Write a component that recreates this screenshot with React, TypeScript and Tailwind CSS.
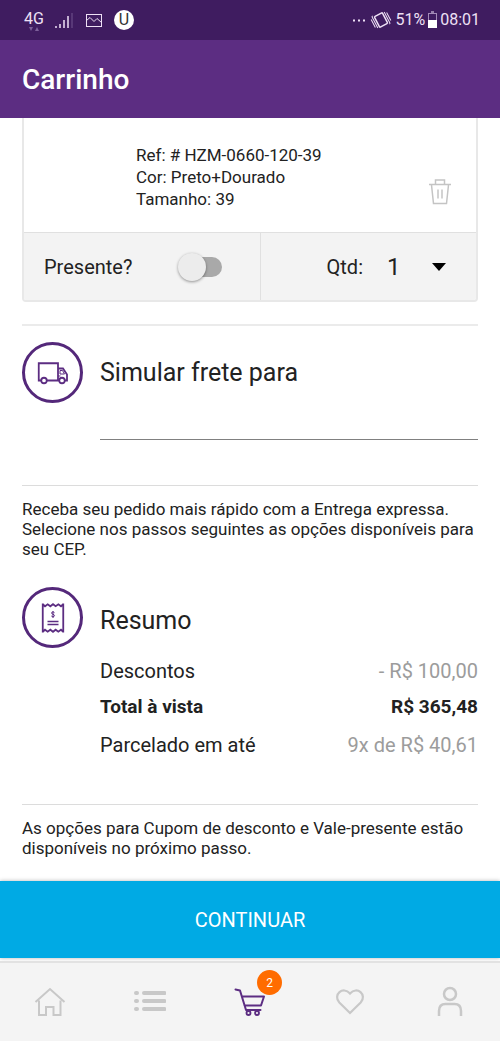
import { useState } from "react";

function StatusBar() {
  return (
    <div className="flex h-10 items-center justify-between bg-[#3f1c60] pl-6 pr-5 text-[#eee0f5]">
      <div className="flex items-center">
        <div className="flex flex-col items-center pt-0.5">
          <span className="text-base leading-4">4G</span>
          <svg width="12" height="5" viewBox="0 0 12 5" fill="#7d609a" aria-hidden="true">
            <path d="M1 0h4L3 4zM7 4h4L9 0z" />
          </svg>
        </div>
        <svg className="ml-2 h-5 w-6" viewBox="0 0 24 20" fill="none" stroke="currentColor" strokeWidth="1.5" aria-hidden="true">
          <path d="M4 18v-2M8 18v-4M12 18v-8M16 18V6" />
          <path d="M20 18V3" stroke="#73558f" strokeWidth="1" />
        </svg>
        <svg className="ml-2 h-5 w-5" viewBox="0 0 20 20" fill="none" stroke="currentColor" aria-hidden="true">
          <rect x="2.500" y="4.500" width="15" height="12" />
          <path d="M2.500 10.500 6 7.500l4 4 3-3 4.500 4" />
        </svg>
        <span className="ml-2.5 flex size-5 items-center justify-center rounded-full bg-white text-base leading-5 text-[#333]">U</span>
      </div>
      <div className="flex items-center">
        <svg width="12" height="3" viewBox="0 0 12 3" fill="currentColor" aria-hidden="true">
          <path d="M0 .5h2v2H0zM5 .5h2v2H5zM10 .5h2v2h-2z" />
        </svg>
        <svg className="ml-1 size-6" viewBox="0 0 24 24" fill="none" stroke="currentColor" aria-hidden="true">
          <g transform="rotate(-28 12 12)">
            <rect x="7.500" y="6" width="9" height="12" rx="1" strokeWidth="1.500" />
            <path d="M5.500 17.500v-12q0-1 1-1M3.500 16V7M18.500 6.500v12q0 1-1 1M20.500 8v9" strokeWidth="1" />
          </g>
        </svg>
        <span className="ml-0.5 text-base leading-5">51%</span>
        <svg className="ml-0.5" width="11" height="18" viewBox="0 0 11 18" fill="none" aria-hidden="true">
          <path d="M4 1h3" stroke="#eee0f5" />
          <rect x="1.500" y="2.500" width="8" height="14" stroke="#a48bb8" />
          <path d="M1 9h9v8H1z" fill="#fff" />
        </svg>
        <span className="ml-0.5 text-base leading-5">08:01</span>
      </div>
    </div>
  );
}

function TrashIcon() {
  return (
    <svg className="h-7 w-6" viewBox="0 0 24 28" fill="none" stroke="#c4c4c4" strokeWidth="1.500" aria-hidden="true">
      <path d="M1 6.500h22M3.500 7l2 18.500h13l2-18.500M7.500 6V2h9v4M10 11.500v9M14 11.500v9" />
    </svg>
  );
}

function TruckIcon() {
  return (
    <svg className="size-8" viewBox="0 0 32 32" fill="none" stroke="#5c2d82" strokeWidth="1.800" aria-hidden="true">
      <path d="M4 23.500H1.750V6.250H21v17.250H9.500M21 11.500h5l4 6v6h-2M21 23.500h1.500" />
      <circle cx="7" cy="23.500" r="2.750" />
      <circle cx="25" cy="23.500" r="2.750" />
      <path d="M23 13.500h2.500l2 3.500H23zM21 19h2.500" strokeWidth="1" />
    </svg>
  );
}

function ReceiptIcon() {
  return (
    <svg className="size-8" viewBox="0 0 32 32" fill="none" stroke="#5c2d82" strokeWidth="1.800" aria-hidden="true">
      <path d="M5.750 1.500v29M26.250 1.500v29M5.500 2l2.500 2.250 2.700-2 2.650 2 2.650-2 2.650 2 2.700-2L24 4.250 26.500 2M5.500 30 8 27.750l2.700 2 2.650-2 2.650 2 2.650-2 2.650 2 2.700-2L26.500 30" />
      <path d="M10.500 19.500h11M10.500 22.500h11" strokeWidth="1.500" />
      <path d="M17.500 10.700c-.5-1-3-1-3 .3 0 1.500 3 1 3 2.700 0 1.300-2.700 1.400-3.200.2M16 9v7" strokeWidth="1" />
    </svg>
  );
}

function SectionBadge({ children }: { children: React.ReactNode }) {
  return (
    <div className="flex size-[61px] shrink-0 items-center justify-center rounded-full border-[3px] border-[#54287a]">
      {children}
    </div>
  );
}

function ProductCard() {
  const [gift, setGift] = useState(false);
  return (
    <section className="overflow-hidden rounded-b border-x-2 border-b-2 border-[#e8e8e8]">
      <div className="flex items-end justify-between pb-[22px] pl-28 pr-6 pt-[26px]">
        <div className="text-[17px] leading-[22px]">
          <p>Ref: # HZM-0660-120-39</p>
          <p>Cor: Preto+Dourado</p>
          <p>Tamanho: 39</p>
        </div>
        <button type="button" aria-label="Remover produto" className="mb-1">
          <TrashIcon />
        </button>
      </div>
      <div className="grid h-[68px] grid-cols-[237fr_215fr] border-t border-[#e0e0e0] bg-[#f3f3f3] text-xl">
        <label className="flex items-center justify-between border-r border-[#e0e0e0] pl-5 pr-9">
          <span>Presente?</span>
          <span className="relative flex h-8 w-12 items-center">
            <input
              type="checkbox"
              role="switch"
              checked={gift}
              onChange={(e) => setGift(e.target.checked)}
              className="peer ml-3 h-5 w-[34px] appearance-none rounded-full bg-[#a9a9a9] checked:bg-[#9a74bb]"
            />
            <span className="pointer-events-none absolute left-0.5 size-7 rounded-full bg-[#ececec] shadow-[0_1px_3px_rgba(0,0,0,0.4)] peer-checked:left-5" />
          </span>
        </label>
        <label className="flex items-center justify-end pr-[30px]">
          <span>Qtd:</span>
          <span className="relative ml-6 flex items-center">
            <select className="w-[59px] appearance-none bg-transparent text-2xl text-[#222]" defaultValue="1">
              <option>1</option>
              <option>2</option>
              <option>3</option>
            </select>
            <svg className="pointer-events-none absolute right-0 h-2 w-[14px]" viewBox="0 0 14 8" aria-hidden="true">
              <path d="M0 0h14L7 8z" fill="#000" />
            </svg>
          </span>
        </label>
      </div>
    </section>
  );
}

const summary = [
  { label: "Descontos", value: "- R$ 100,00", total: false },
  { label: "Total à vista", value: "R$ 365,48", total: true },
  { label: "Parcelado em até", value: "9x de R$ 40,61", total: false },
];

function BottomNav() {
  const item = "flex h-full items-center justify-center";
  return (
    <nav className="grid h-20 grid-cols-5 border-t-2 border-[#e2e2e2] bg-[#f4f4f4] text-[#c8c8c8]">
      <a href="#inicio" aria-label="Início" className={item}>
        <svg className="size-8" viewBox="0 0 32 32" fill="none" stroke="currentColor" strokeWidth="2" aria-hidden="true">
          <path d="M1.500 16 16 3l14.500 13M5 14.500V29h7v-8h7.500v8h7V14.500" />
        </svg>
      </a>
      <a href="#categorias" aria-label="Categorias" className={item}>
        <svg className="size-8" viewBox="0 0 32 32" stroke="currentColor" strokeWidth="4" strokeLinecap="round" aria-hidden="true">
          <path d="M2 7h1M2 15h1M2 23h1M10 7h20.500M10 15h20.500M10 23h20.500" />
        </svg>
      </a>
      <a href="#carrinho" aria-label="Carrinho" aria-current="page" className={item}>
        <span className="relative">
          <svg className="size-8" viewBox="0 0 32 32" fill="none" stroke="#5c2d82" strokeWidth="2" strokeLinecap="round" strokeLinejoin="round" aria-hidden="true">
            <path d="M1.500 3.500 6 4.500l6 19.500h14.500M8 10.500h22l-3 9H10.500" />
            <circle cx="14.500" cy="27" r="2" strokeWidth="1.800" />
            <circle cx="23" cy="27" r="2" strokeWidth="1.800" />
          </svg>
          <span className="absolute -right-4 -top-4 flex size-[25px] items-center justify-center rounded-full bg-[#ff6c00] text-xs text-white">2</span>
        </span>
      </a>
      <a href="#favoritos" aria-label="Favoritos" className={item}>
        <svg className="size-8" viewBox="0 0 32 32" fill="none" stroke="currentColor" strokeWidth="2.200" aria-hidden="true">
          <path d="M16 27 5.300 16.500C-1.500 9 9-.5 16 7.500c7-8 17.500 1.500 10.700 9z" />
        </svg>
      </a>
      <a href="#conta" aria-label="Minha conta" className={item}>
        <svg className="size-8" viewBox="0 0 32 32" fill="none" stroke="currentColor" strokeWidth="2.500" aria-hidden="true">
          <circle cx="16" cy="8" r="6" />
          <path d="M5 30v-5c0-4.500 2-7 6.500-7h9c4.500 0 6.500 2.500 6.500 7v5" />
        </svg>
      </a>
    </nav>
  );
}

export default function App() {
  return (
    <div className="flex min-h-screen flex-col bg-white font-['Roboto',sans-serif] text-[#222]">
      <StatusBar />
      <header className="flex h-[78px] items-center bg-[#5c2d82] px-[22px] pt-0.5">
        <h1 className="text-[28px] font-medium leading-8 text-white">Carrinho</h1>
      </header>

      <main className="flex-1 px-[22px]">
        <ProductCard />

        <section className="mt-[22px] border-t-2 border-[#ebebeb] pt-4">
          <div className="flex items-center gap-[17px]">
            <SectionBadge>
              <TruckIcon />
            </SectionBadge>
            <label htmlFor="cep" className="text-[25px] leading-8">Simular frete para</label>
          </div>
          <input
            id="cep"
            inputMode="numeric"
            className="ml-[78px] block h-[37px] w-[calc(100%-78px)] border-b border-[#808080] bg-transparent text-xl outline-none"
          />
        </section>

        <p className="mt-[45px] border-t border-[#dcdcdc] pt-[13px] text-[17px] leading-5">
          Receba seu pedido mais rápido com a Entrega expressa. Selecione nos passos seguintes as opções disponíveis para seu CEP.
        </p>

        <section className="mt-7">
          <div className="flex items-center gap-[17px]">
            <SectionBadge>
              <ReceiptIcon />
            </SectionBadge>
            <h2 className="pt-1.5 text-[25px] leading-8">Resumo</h2>
          </div>
          <dl className="ml-[78px] mt-1 text-xl">
            {summary.map((row) => (
              <div
                key={row.label}
                className={row.total ? "flex h-[37px] items-center justify-between text-[19px] font-bold" : "flex h-[37px] items-center justify-between"}
              >
                <dt>{row.label}</dt>
                <dd className={row.total ? "" : "text-[#9c9c9c]"}>{row.value}</dd>
              </div>
            ))}
          </dl>
        </section>

        <p className="mt-[41px] border-t border-[#dcdcdc] pb-5 pt-[13px] text-[17px] leading-5">
          As opções para Cupom de desconto e Vale-presente estão disponíveis no próximo passo.
        </p>
      </main>

      <button type="button" className="mb-[3px] h-[77px] w-full bg-[#00aae4] text-xl text-white shadow-[0_0_4px_rgba(0,0,0,0.3)]">
        CONTINUAR
      </button>
      <BottomNav />
    </div>
  );
}
